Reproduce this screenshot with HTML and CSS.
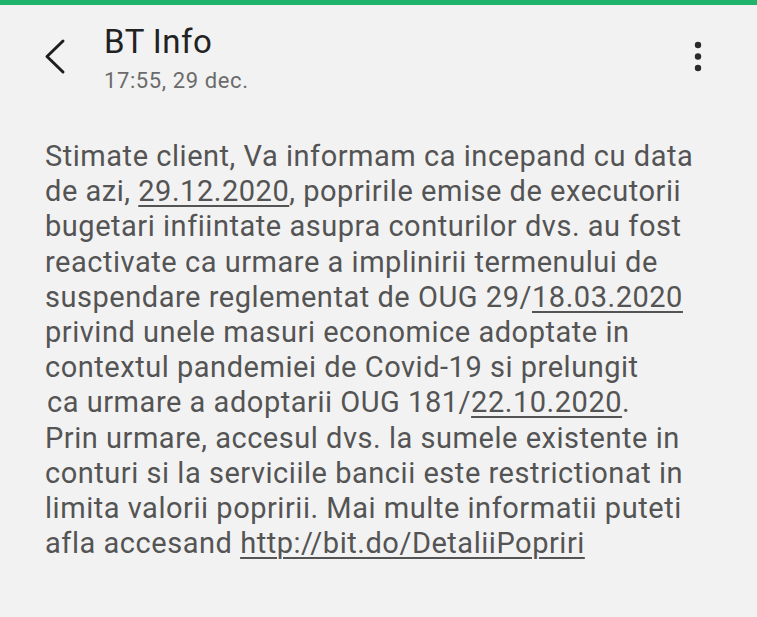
FILE: index.html
```html
<!DOCTYPE html>
<html lang="ro">
<head>
<meta charset="utf-8">
<title>BT Info</title>
<link rel="stylesheet" href="styles.css">
</head>
<body>
<div class="topbar"></div>
<header class="header">
  <svg class="back" width="30" height="40" viewBox="0 0 30 40"><polyline points="23,5 7,20.5 23,36" fill="none" stroke="#1e1e1e" stroke-width="3" stroke-linecap="round" stroke-linejoin="round"/></svg>
  <div class="titles">
    <div class="title">BT Info</div>
    <div class="subtitle">17:55, 29 dec.</div>
  </div>
  <svg class="menu" width="12" height="40" viewBox="0 0 12 40"><circle cx="6" cy="8" r="3.2" fill="#2a2a2a"/><circle cx="6" cy="19.5" r="3.2" fill="#2a2a2a"/><circle cx="6" cy="31" r="3.2" fill="#2a2a2a"/></svg>
</header>
<main class="message">
Stimate client, Va informam ca incepand cu data<br>
de azi, <span class="u">29.12.2020</span>, popririle emise de executorii<br>
bugetari infiintate asupra conturilor dvs. au fost<br>
reactivate ca urmare a implinirii termenului de<br>
suspendare reglementat de OUG 29/<span class="u">18.03.2020</span><br>
privind unele masuri economice adoptate in<br>
contextul pandemiei de Covid-19 si prelungit<br>
<span class="ind">ca urmare a adoptarii OUG 181/<span class="u">22.10.2020</span>.</span><br>
Prin urmare, accesul dvs. la sumele existente in<br>
conturi si la serviciile bancii este restrictionat in<br>
limita valorii popririi. Mai multe informatii puteti<br>
afla accesand <span class="u">http://bit.do/DetaliiPopriri</span>
</main>
</body>
</html>
```

FILE: styles.css
```css
html, body {
  margin: 0;
  padding: 0;
  background: #f2f2f2;
  font-family: Roboto, "Noto Sans", "Liberation Sans", sans-serif;
}
.topbar {
  height: 5px;
  background: #1fb36b;
}
.header {
  display: flex;
  align-items: flex-start;
  padding: 18px 53px 0 40px;
}
.back {
  margin-top: 13px;
  flex: none;
}
.titles {
  margin-left: 34px;
  flex: 1;
}
.title {
  font-size: 33px;
  line-height: 38px;
  letter-spacing: 0.5px;
  color: #222;
}
.subtitle {
  margin-top: 7px;
  font-size: 22px;
  line-height: 26px;
  letter-spacing: 0.6px;
  color: #6b6b6b;
}
.menu {
  margin-top: 14px;
  flex: none;
}
.message {
  display: block;
  margin-top: 45px;
  padding-left: 45px;
  font-size: 29px;
  line-height: 35.2px;
  letter-spacing: 0.53px;
  color: #545454;
  white-space: nowrap;
}
.u {
  text-decoration: underline;
  text-decoration-thickness: 1.5px;
  text-underline-offset: 4px;
}
.ind {
  padding-left: 2px;
}
```
